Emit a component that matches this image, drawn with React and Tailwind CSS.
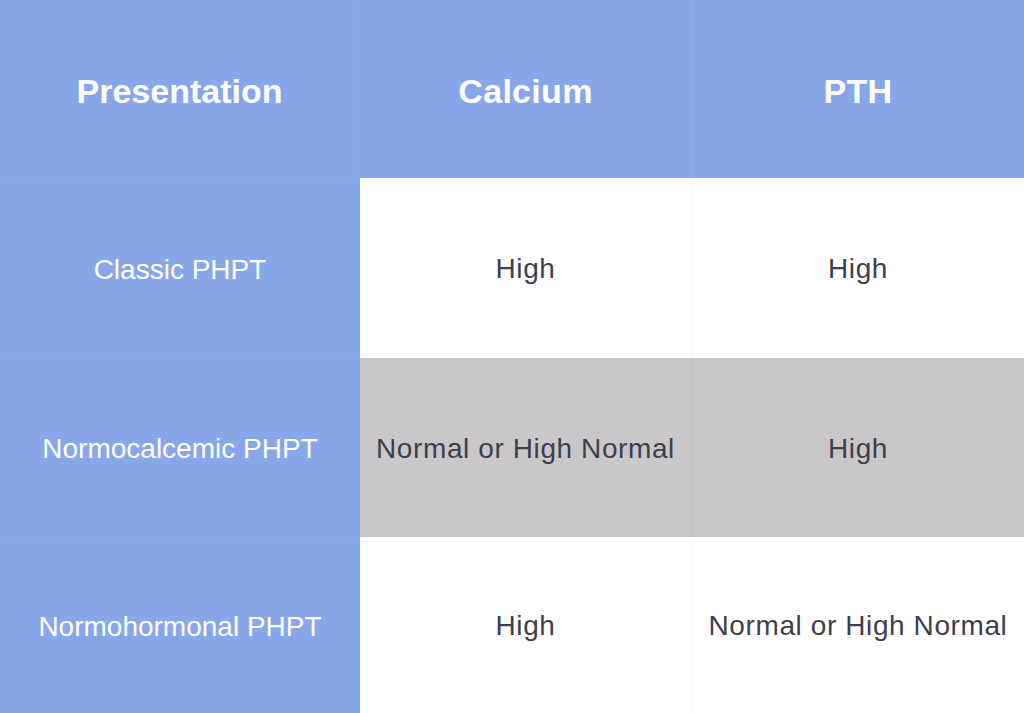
export default function App() {
  const rows = [
    { label: "Classic PHPT", ca: "High", pth: "High", bg: "bg-white" },
    { label: "Normocalcemic PHPT", ca: "Normal or High Normal", pth: "High", bg: "bg-[#c9c7c9]" },
    { label: "Normohormonal PHPT", ca: "High", pth: "Normal or High Normal", bg: "bg-white" },
  ];
  const heights = ["h-[180px]", "h-[179px]", "h-[176px]"];
  return (
    <div className="w-[1024px] h-[713px] overflow-hidden bg-white" style={{ fontFamily: '"Liberation Sans", Arial, sans-serif' }}>
      <div className="grid grid-cols-[360px_332px_332px]">
        <div className="h-[178px] pt-[5px] bg-[#87a7ea] flex items-center justify-center text-white font-bold text-[34px] border-r border-[#8aaaeb]">Presentation</div>
        <div className="h-[178px] pt-[5px] bg-[#87a7ea] flex items-center justify-center text-white font-bold text-[34px] tracking-[0.3px] border-r border-[#8dadec]">Calcium</div>
        <div className="h-[178px] pt-[5px] bg-[#87a7ea] flex items-center justify-center text-white font-bold text-[34px] tracking-[0.3px]">PTH</div>
        {rows.map((r, i) => (
          <>
            <div key={"a" + i} className={`${heights[i]} pt-[2px] bg-[#87a7ea] flex items-center justify-center text-white text-[28px] border-t border-[#8aaaeb] whitespace-nowrap`}>{r.label}</div>
            <div key={"b" + i} className={`${heights[i]} pt-[2px] ${r.bg} flex items-center justify-center text-[#3d3f4c] text-[28px] tracking-[0.6px] border-r border-[#00000008] whitespace-nowrap`}>{r.ca}</div>
            <div key={"c" + i} className={`${heights[i]} pt-[2px] ${r.bg} flex items-center justify-center text-[#3d3f4c] text-[28px] tracking-[0.6px] whitespace-nowrap`}>{r.pth}</div>
          </>
        ))}
      </div>
    </div>
  );
}
